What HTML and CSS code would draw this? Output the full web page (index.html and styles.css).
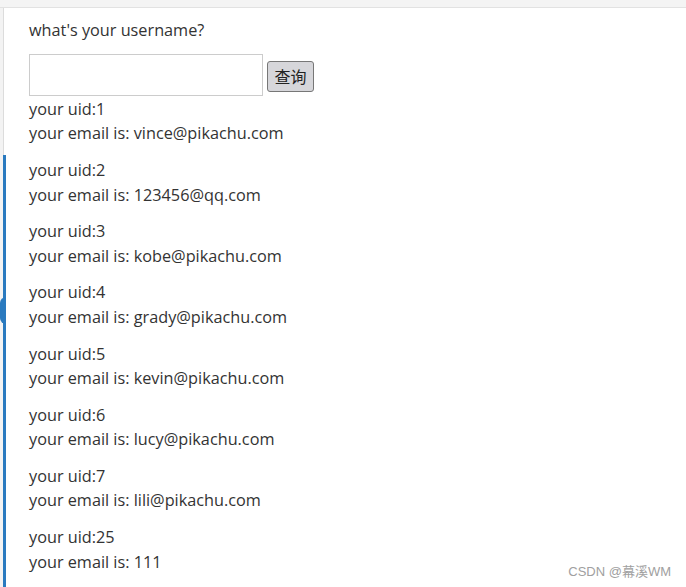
FILE: index.html
```html
<!DOCTYPE html>
<html>
<head>
<meta charset="utf-8">
<link rel="stylesheet" href="styles.css">
</head>
<body>
<div class="topbar"></div>
<div class="main">
  <div class="rail">
    <div class="rail-line"></div>
    <div class="rail-bump"></div>
  </div>
  <div class="content">
    <p class="question">what's your username?</p>
    <form class="search">
      <input class="search-input" type="text">
      <button class="search-btn" type="button">查询</button>
    </form>
    <div class="records">
      <p class="rec">your uid:1<br>your email is: vince@pikachu.com</p>
      <p class="rec">your uid:2<br>your email is: 123456@qq.com</p>
      <p class="rec">your uid:3<br>your email is: kobe@pikachu.com</p>
      <p class="rec">your uid:4<br>your email is: grady@pikachu.com</p>
      <p class="rec">your uid:5<br>your email is: kevin@pikachu.com</p>
      <p class="rec">your uid:6<br>your email is: lucy@pikachu.com</p>
      <p class="rec">your uid:7<br>your email is: lili@pikachu.com</p>
      <p class="rec">your uid:25<br>your email is: 111</p>
    </div>
  </div>
</div>
<div class="watermark">CSDN @幕溪WM</div>
</body>
</html>
```
FILE: styles.css
```css
html, body {
  margin: 0;
  padding: 0;
  background: #fff;
  overflow: hidden;
  height: 587px;
}
body {
  font-family: "Open Sans", "Noto Sans CJK SC", sans-serif;
  font-size: 16.25px;
  color: #333;
  position: relative;
}
.topbar {
  height: 7px;
  background: #f4f4f4;
  border-bottom: 1px solid #e2e2e2;
}
.main {
  display: flex;
  height: 579px;
}
.rail {
  width: 3px;
  background: #f3f3f3;
  border-right: 1px solid #dcdcdc;
  position: relative;
  flex: none;
}
.rail-line {
  position: absolute;
  left: 3px;
  top: 147px;
  width: 3px;
  height: 432px;
  background: #2a7abf;
}
.rail-bump {
  position: absolute;
  left: 0;
  top: 289px;
  width: 6px;
  height: 27px;
  background: #2a7abf;
  border-radius: 6px 0 0 6px;
}
.content {
  padding: 10px 0 0 25px;
  line-height: 24px;
}
.question {
  margin: 0 0 12px;
}
.search {
  display: flex;
  align-items: center;
  gap: 4px;
  margin: 0;
}
.search-input {
  width: 234px;
  height: 42px;
  box-sizing: border-box;
  border: 1px solid #cccccc;
  margin: 0;
  padding: 0 6px;
  font: inherit;
}
.search-btn {
  width: 47px;
  height: 31px;
  margin: 2px 0 0;
  padding: 0;
  box-sizing: border-box;
  background: #d6d6da;
  border: 1px solid #777;
  border-radius: 3px;
  font-family: "Noto Sans CJK SC", sans-serif;
  font-size: 16px;
  color: #222;
}
.records {
  padding-top: 1px;
  line-height: 24.4px;
}
.rec {
  margin: 0 0 12.35px;
}
.watermark {
  position: absolute;
  right: 15px;
  top: 561px;
  font-family: "Liberation Sans", "Noto Sans CJK SC", sans-serif;
  font-size: 13px;
  color: #a0a0a0;
}
```
